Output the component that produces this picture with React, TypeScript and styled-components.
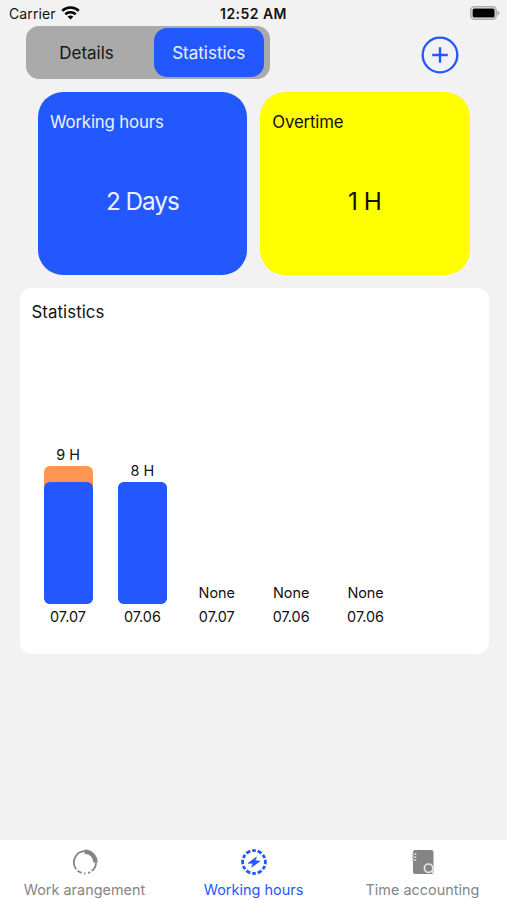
import React from "react";
import styled, { createGlobalStyle } from "styled-components";

const BLUE = "#2458ff";
const GREY = "#858585";

const GlobalStyle = createGlobalStyle`
  * { box-sizing: border-box; }
  body { margin: 0; background: #f2f2f2; }
`;

const Screen = styled.div`
  width: 507px;
  height: 900px;
  display: flex;
  flex-direction: column;
  background: #f2f2f2;
  font-family: Inter, "Liberation Sans", sans-serif;
  color: #111;
  overflow: hidden;
  white-space: nowrap;
`;

const StatusBar = styled.header`
  height: 25.5px;
  flex: none;
  display: grid;
  grid-template-columns: 1fr auto 1fr;
  align-items: center;
  padding: 2px 7px 0 9px;
  font-size: 14px;
  line-height: 20px;
`;

const Carrier = styled.div`
  display: flex;
  align-items: center;
  gap: 5.5px;
  letter-spacing: 0.1px;
  svg { margin-top: -1px; }
`;

const Clock = styled.div`
  font-weight: 600;
  letter-spacing: 0.45px;
  margin-right: 2px;
`;

const BatterySlot = styled.div`
  display: flex;
  justify-content: flex-end;
  margin-top: -1px;
`;

const TopBar = styled.div`
  height: 66px;
  flex: none;
  display: flex;
  align-items: flex-start;
  justify-content: space-between;
  padding: 0 48.5px 0 25.5px;
`;

const Segments = styled.div`
  width: 244.5px;
  height: 53.5px;
  display: flex;
  padding: 2.5px 6px 2.5px 0;
  border-radius: 13px;
  background: #aaa;
`;

const Segment = styled.button<{ $active?: boolean }>`
  flex: ${(p) => (p.$active ? "0 0 110.5px" : "1")};
  border: 0;
  border-radius: 13px;
  padding: ${(p) => (p.$active ? "1.5px 0 0" : "1.5px 6px 0 0")};
  font: 400 17px/24px Inter, sans-serif;
  letter-spacing: 0;
  color: ${(p) => (p.$active ? "#edf1ff" : "#151515")};
  background: ${(p) => (p.$active ? BLUE : "transparent")};
`;

const AddButton = styled.button`
  border: 0;
  padding: 0;
  margin-top: 10px;
  background: none;
  line-height: 0;
`;

const Cards = styled.div`
  display: flex;
  gap: 12.5px;
  height: 183px;
  flex: none;
  padding: 0 37.5px;
`;

const Card = styled.section<{ $bg: string; $ink: string }>`
  width: 210px;
  height: 183px;
  display: flex;
  flex-direction: column;
  padding: 18px 12.5px 0;
  border-radius: 25px;
  background: ${(p) => p.$bg};
  color: ${(p) => p.$ink};
`;

const Title = styled.h2<{ $tracking?: number }>`
  margin: 0;
  font-size: 16.8px;
  font-weight: 400;
  line-height: 24px;
  letter-spacing: ${(p) => p.$tracking ?? -0.15}px;
`;

const Value = styled.div<{ $tight?: boolean }>`
  margin-top: 49px;
  text-align: center;
  font-size: 24.3px;
  line-height: 36px;
  letter-spacing: ${(p) => (p.$tight ? -1 : -0.5)}px;
`;

const Panel = styled.section`
  width: 469px;
  height: 366px;
  flex: none;
  margin: 13px 0 0 19.5px;
  padding: 12px 12px 0;
  display: flex;
  flex-direction: column;
  border-radius: 12px;
  background: #fff;
`;

const Chart = styled.div`
  height: 305px;
  display: flex;
  align-items: flex-end;
  gap: 25.4px;
  margin-left: 12px;
`;

const Column = styled.div`
  width: 49px;
  display: flex;
  flex-direction: column;
  align-items: center;
  font-size: 14.4px;
  line-height: 24px;
`;

const Bar = styled.div<{ $extra?: boolean }>`
  width: 49px;
  display: flex;
  align-items: flex-end;
  margin: -1px 0 1px;
  border-radius: 6px;
  overflow: hidden;
  background: ${(p) =>
    p.$extra ? `linear-gradient(#ff9654 30px, ${BLUE} 30px)` : BLUE};
`;

const Regular = styled.div`
  width: 100%;
  height: 122px;
  border-radius: 6px;
  background: ${BLUE};
`;

const TabBar = styled.nav`
  height: 60px;
  flex: none;
  margin-top: auto;
  display: grid;
  grid-template-columns: repeat(3, 1fr);
  background: #fff;
`;

const Tab = styled.button<{ $active?: boolean }>`
  display: flex;
  flex-direction: column;
  align-items: center;
  border: 0;
  padding: 8px 0 0;
  background: none;
  color: ${(p) => (p.$active ? BLUE : GREY)};
  font: 400 14.4px/20px Inter, sans-serif;
  letter-spacing: 0.03px;
  svg { display: block; margin-bottom: 4px; }
`;

const columns = [
  { label: "9 H", day: "07.07", hours: 9 },
  { label: "8 H", day: "07.06", hours: 8 },
  { label: "None", day: "07.07", hours: 0 },
  { label: "None", day: "07.06", hours: 0 },
  { label: "None", day: "07.06", hours: 0 },
];

const Wifi = () => (
  <svg width="19" height="14" viewBox="0 0 19 14" fill="none" stroke="#000" strokeWidth="2.6">
    <path d="M1.2 4.9C5.8.4 13.2.4 17.8 4.9" />
    <path d="M4.3 8.3c2.9-2.8 7.5-2.8 10.4 0" />
    <path d="M6.6 10.5c1.7-1.5 4.1-1.5 5.8 0L9.5 13.5z" fill="#000" stroke="none" />
  </svg>
);

const Battery = () => (
  <svg width="30" height="14" viewBox="0 0 30 14">
    <rect x=".8" y=".8" width="25.4" height="12.4" rx="3.6" fill="#f2f2f2" stroke="#aaa" strokeWidth="1.5" />
    <rect x="2.6" y="2.5" width="22" height="9" rx="1.6" fill="#000" />
    <path d="M27.4 4.6c2.8.8 2.8 4 0 4.8z" fill="#aaa" />
  </svg>
);

const Plus = () => (
  <svg width="38" height="38" viewBox="0 0 38 38" fill="none" stroke={BLUE} strokeWidth="2.3">
    <circle cx="19" cy="19" r="17.3" />
    <path d="M11.2 19h15.6M19 11.2v15.6" strokeWidth="2.4" />
  </svg>
);

const ProgressIcon = () => (
  <svg width="28" height="28" viewBox="0 0 28 28" fill="none" stroke="currentColor">
    <path d="M14 3.2A11.2 11.2 0 0 0 5.2 21.2" strokeWidth="1.8" />
    <path d="M6.6 22.6a11.2 11.2 0 0 0 4.1 2.3M13 25.4h1.4M17 25a11.2 11.2 0 0 0 2.2-.9M20.8 23a11.2 11.2 0 0 0 4.2-8.8" strokeWidth="1.8" />
    <path d="M13.6 3.8A10.4 10.4 0 0 1 24.4 14.5" strokeWidth="4.4" />
  </svg>
);

const EnergyIcon = () => (
  <svg width="28" height="28" viewBox="0 0 28 28" fill="none" stroke="currentColor">
    <circle cx="14" cy="14" r="11.4" strokeWidth="2.8" pathLength="96" strokeDasharray="6 2.5 5 2.5" strokeDashoffset="3" />
    <path d="M16.5 9L8 15.2l5 .2-1.4 3.8L20 13.2l-4.8-.6z" fill="currentColor" stroke="currentColor" strokeWidth=".6" />
  </svg>
);

const LedgerIcon = () => (
  <svg width="28" height="28" viewBox="0 0 28 28" fill="none">
    <rect x="4" y="2" width="20.5" height="24" rx="2" fill="currentColor" />
    <path d="M3 6.2h4.2M3 9.2h4.2M3 12.2h4.2" stroke="#fff" strokeWidth="1.6" />
    <path d="M3 6.2h3.5M3 9.2h3.5M3 12.2h3.5" stroke="currentColor" strokeWidth=".9" />
    <circle cx="19.6" cy="20.2" r="4.2" stroke="#e9e9e9" strokeWidth="1.6" />
    <path d="M22.5 23.2l2.5 2.3" stroke="#e9e9e9" strokeWidth="1.6" />
  </svg>
);

export default function App() {
  return (
    <Screen>
      <GlobalStyle />
      <StatusBar>
        <Carrier>
          Carrier
          <Wifi />
        </Carrier>
        <Clock>12:52 AM</Clock>
        <BatterySlot>
          <Battery />
        </BatterySlot>
      </StatusBar>
      <TopBar>
        <Segments>
          <Segment>Details</Segment>
          <Segment $active>Statistics</Segment>
        </Segments>
        <AddButton aria-label="Add">
          <Plus />
        </AddButton>
      </TopBar>
      <Cards>
        <Card $bg={BLUE} $ink="#edf1ff">
          <Title>Working hours</Title>
          <Value $tight>2 Days</Value>
        </Card>
        <Card $bg="#ffff00" $ink="#111100">
          <Title>Overtime</Title>
          <Value>1 H</Value>
        </Card>
      </Cards>
      <Panel>
        <Title $tracking={0.08}>Statistics</Title>
        <Chart>
          {columns.map((c, i) => (
            <Column key={i}>
              <span>{c.label}</span>
              {c.hours > 0 && (
                <Bar $extra={c.hours > 8} style={{ height: c.hours * 15.25 }}>
                  <Regular />
                </Bar>
              )}
              <span>{c.day}</span>
            </Column>
          ))}
        </Chart>
      </Panel>
      <TabBar>
        <Tab>
          <ProgressIcon />
          Work arangement
        </Tab>
        <Tab $active>
          <EnergyIcon />
          Working hours
        </Tab>
        <Tab>
          <LedgerIcon />
          Time accounting
        </Tab>
      </TabBar>
    </Screen>
  );
}
